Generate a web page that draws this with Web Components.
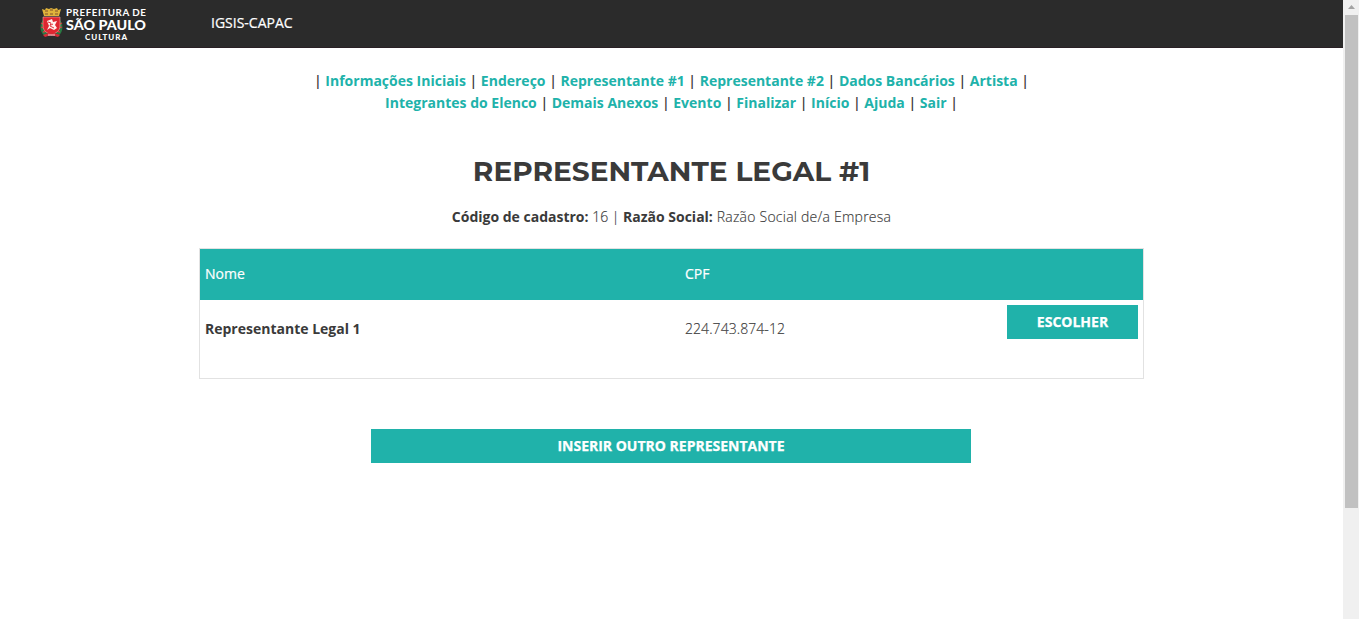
<!DOCTYPE html>
<html lang="pt-BR">
<head>
<meta charset="utf-8">
<title>IGSIS-CAPAC</title>
<style>
html,body{margin:0;height:100%;overflow:hidden;background:#fff}
body{font:300 14px/22px "Open Sans","Noto Sans",sans-serif;color:#3a3a3a}
</style>
</head>
<body>
<capac-page></capac-page>
<script>
const define=(name,html)=>customElements.define(name,class extends HTMLElement{
  constructor(){super();this.attachShadow({mode:'open'}).innerHTML=html;}
});
define('city-logo',`<style>
:host{display:flex;width:108px;height:36px;color:#fff;gap:3px}
svg{display:block;width:23px;height:30px;flex:none}
.crest{margin-top:1px}
.words{display:block;width:82px;height:36px;overflow:visible}
text{font-family:Lato,sans-serif;fill:#fff}
</style>
<svg class="crest" viewBox="0 0 23 30">
<path d="M3 12C-1 17 0 25 5 28L8 24 5 16zM20 12c4 5 3 13-2 16l-3-4 3-8z" fill="#277b43"/>
<path d="M1 15l4 2M1 19l5 2M3 24l4-1M22 15l-4 2M22 19l-5 2M20 24l-4-1" stroke="#d43a3c" stroke-width="1.300"/>
<path d="M2 1l3 1 1-2 3 1 2-1 3 1 3-1 1 2 3-1-2 7H4z" fill="#dfb43b"/>
<path d="M5 3h3M10 2h3M15 3h3M5 6h3M10 6h3M15 6h3" stroke="#80502b"/>
<path d="M3 9h17v9c0 5-4 7-8.500 9C7 25 3 23 3 18z" fill="#df2630" stroke="#f2a7a2" stroke-width=".6"/>
<path d="M7 13l5-2 1 3 4-1-2 4 2 3-3 2-4-2-3 2 2-4z" fill="#fff1ed"/>
<path d="M8 14l3 1-1 3 4 2M13 16l-2 1" stroke="#df3840" stroke-width="1" fill="none"/>
<path d="M3 27q8-4 17 0l-2 2q-7-3-13 0z" fill="#d52b35"/><path d="M8 27h7" stroke="#fff" stroke-width=".8"/>
</svg>
<svg class="words" viewBox="0 0 82 36">
<text x="0" y="9.300" font-size="9.800" font-weight="700" textLength="80">PREFEITURA DE</text>
<text x="0" y="22.800" font-size="13.200" font-weight="900" textLength="80" lengthAdjust="spacingAndGlyphs">SÃO PAULO</text>
<text x="19" y="32.500" font-size="8" font-weight="900" textLength="42">CULTURA</text>
</svg>`);
define('top-bar',`<style>
:host{display:flex;box-sizing:border-box;height:48px;background:#2b2b2b;border-bottom:1px solid #2a2025;padding:7px 0 0 40px;color:#fff}
.brand{margin-left:63px;padding-top:5px;font-weight:400;white-space:nowrap;-webkit-text-stroke:.2px #fff}
</style><city-logo></city-logo><span class="brand"><slot></slot></span>`);
define('nav-link',`<style>:host{color:#20b2aa;font-weight:700}</style><slot></slot>`);
define('site-menu',`<style>:host{display:block;text-align:center;margin-top:22px;font-weight:600;white-space:nowrap}div{height:22px}</style>
<div>| <nav-link>Informações Iniciais</nav-link> | <nav-link>Endereço</nav-link> | <nav-link>Representante #1</nav-link> | <nav-link>Representante #2</nav-link> | <nav-link>Dados Bancários</nav-link> | <nav-link>Artista</nav-link> |</div>
<div><nav-link>Integrantes do Elenco</nav-link> | <nav-link>Demais Anexos</nav-link> | <nav-link>Evento</nav-link> | <nav-link>Finalizar</nav-link> | <nav-link>Início</nav-link> | <nav-link>Ajuda</nav-link> | <nav-link>Sair</nav-link> |</div>`);
define('page-title',`<style>:host{display:block;text-align:center;margin-top:40px}h1{margin:0;font:700 28px/34px Montserrat,Inter,sans-serif;white-space:nowrap}p{margin:18px 0 0}b{font-weight:700}.company{letter-spacing:.23px;-webkit-text-stroke:.15px #3a3a3a}.code{-webkit-text-stroke:.15px #3a3a3a}</style>
<h1><slot></slot></h1><p><b>Código de cadastro:</b><span class="code"> 16 | </span><b>Razão Social:</b><span class="company"> Razão Social de/a Empresa</span></p>`);
define('action-button',`<style>:host{display:block}button{display:block;width:100%;height:34px;border:0;padding:0;background:#20b2aa;color:#fff;font:700 14px/34px "Open Sans",sans-serif;text-align:center;-webkit-text-stroke:.25px #fff}</style><button><slot></slot></button>`);
define('people-table',`<style>
:host{display:block;box-sizing:border-box;width:945px;height:131px;margin:20px auto 0;border:1px solid #e2e2e2}
.row{display:grid;grid-template-columns:480px 1fr 131px;padding:0 5px}
.head{height:51px;line-height:50px;background:#20b2aa;color:#fff;font-weight:400;-webkit-text-stroke:.2px #fff}
.body{padding-top:5px}.body span{padding-top:13px}.name{font-weight:700}.cpf{letter-spacing:.07px;-webkit-text-stroke:.15px #3a3a3a}
</style><div class="row head"><span>Nome</span><span>CPF</span></div>
<div class="row body"><span class="name">Representante Legal 1</span><span class="cpf">224.743.874-12</span><action-button>ESCOLHER</action-button></div>`);
define('scroll-bar',`<style>:host{display:block;background:#f0f0f0}svg{display:block;width:16px;height:15px}div{width:13px;height:493px;margin-left:2px;background:#c1c1c1}</style>
<svg viewBox="0 0 16 15"><path d="M5 9l3.500-4L12 9z" fill="#a3a3a3"/></svg><div></div>`);
define('capac-page',`<style>
:host{display:grid;grid-template-columns:1343px 16px;height:619px}
.insert{width:600px;margin:50px 0 0 371px}
</style><main><top-bar>IGSIS-CAPAC</top-bar><site-menu></site-menu><page-title>REPRESENTANTE LEGAL #1</page-title><people-table></people-table><action-button class="insert">INSERIR OUTRO REPRESENTANTE</action-button></main><scroll-bar></scroll-bar>`);
</script>
</body>
</html>
